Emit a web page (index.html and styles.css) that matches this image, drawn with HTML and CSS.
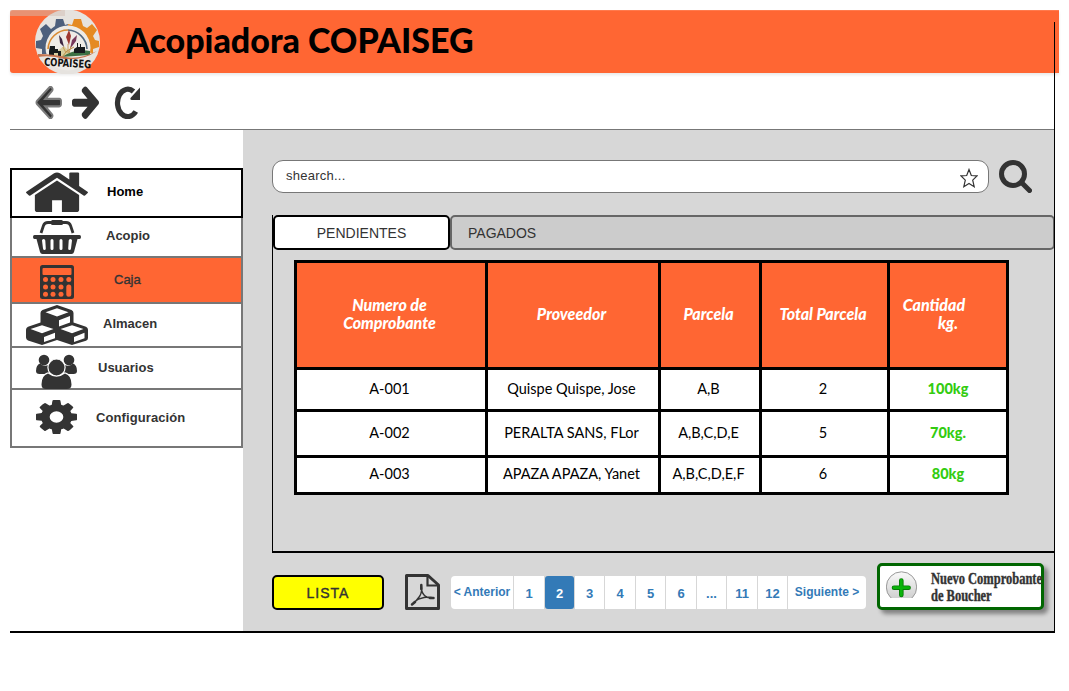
FILE: index.html
```html
<!DOCTYPE html>
<html lang="es">
<head>
<meta charset="utf-8">
<title>Acopiadora COPAISEG</title>
<link rel="stylesheet" href="styles.css">
</head>
<body>
<div class="page">
  <header class="banner">
    <svg class="logo" viewBox="0 0 65 64">
      <defs><clipPath id="arch"><path d="M11 48V37a22 22 0 0 1 44 0v8z"/></clipPath></defs>
      <ellipse cx="32.500" cy="32" rx="32.500" ry="32.500" fill="#e6e3df"/>
      <path fill="#4d5f7c" d="M33 14l-3 1-2-6-7 0-1 7-4 3-5-5-6 5 3 7-2 4-5 1 0 7 6 1v5l22 0z"/>
      <path fill="#e58a22" d="M33 14l4 1 2-6 7 0 2 7 4 2 5-4 5 6-4 6 2 4 4 1v6l-6 2v4l-25-2z"/>
      <circle cx="33" cy="38" r="22.500" fill="#eeebe6"/>
      <path d="M13 39a20 20 0 0 1 20-19" fill="none" stroke="#d98a32" stroke-width="1.600"/>
      <path d="M33 20a20 20 0 0 1 19 19" fill="none" stroke="#52677e" stroke-width="1.600"/>
      <g clip-path="url(#arch)">
        <path d="M17 45l12-9 7 7 4-2v6z" fill="#d8cf9e"/>
        <path d="M27 47q13-9 28-6v5l-20 4z" fill="#3d7144"/>
        <path d="M27 47q4-7 12-10" fill="none" stroke="#bd8c42"/>
      </g>
      <path d="M24 25l3 4 2 8-4-4z" fill="#3c2741"/><path d="M34 20l2 6-2 9-3-8z" fill="#9f3830"/><path d="M42 25l-1 6-6 8 2-9z" fill="#76375a"/>
      <path d="M28 37l3 6M33 34v9M36 36l-2 7" stroke="#bd8c42" stroke-width=".8"/>
      <path d="M15 36h5v3h3v2h3v5h-3v-3h-4v2h-5v-4zM39 43v-4l3-2v-4h1v4h2v-3h1v3h4v6z" fill="#171b1d"/>
      <path d="M3 44q15 0 28 3t31-6q-14 10-33 8-13-4-26-2z" fill="#c4744f"/>
      <text class="logo-name" x="9" y="57" textLength="47" lengthAdjust="spacingAndGlyphs" transform="rotate(3 32 55)">COPAISEG</text>
    </svg>
    <h1 class="title">Acopiadora COPAISEG</h1>
    <span class="corner"></span>
  </header>

  <nav class="toolbar">
    <svg class="nav-back" viewBox="120 160 1560 1580" preserveAspectRatio="none"><path fill="#333" stroke="#7b7b7b" stroke-width="110" d="M1624 896v128q0 43-26 75t-78 32h-804l393 394q25 26 25 60t-25 60l-35 36q-27 25-60 25-34 0-61-25l-721-662q-27-27-27-70 0-42 27-71l721-650q28-28 61-28 32 0 60 28l35 34q28 28 28 61t-28 61l-393 393h804q52 0 78 28t26 60z"/></svg>
    <svg class="nav-next" viewBox="64 160 1536 1580" preserveAspectRatio="none"><path fill="#333" d="M1600 960q0 54-37 91l-651 651q-39 37-91 37-51 0-90-37l-75-75q-38-38-38-91t38-91l293-293h-757q-52 0-90-37.500t-38-90.500v-128q0-53 38-90.500t90-37.500h757l-293-294q-38-36-38-90t38-90l75-75q38-38 90-38 53 0 91 38l651 651q37 35 37 90z"/></svg>
    <svg class="nav-reload" viewBox="0 0 26 33"><path d="M21.800 25.500A10.300 13.700 0 1 1 19.500 5.500" fill="none" stroke="#333" stroke-width="5.200"/><path d="M26 1.500V14H17.500q-2-.5-1-2z" fill="#333"/></svg>
  </nav>

  <div class="workspace">
    <aside class="sidebar">
      <ul class="menu">
        <li class="item home">
          <svg class="icon" viewBox="89 240 1614 1296" preserveAspectRatio="none"><path d="M1472 992v480q0 26-19 45t-45 19h-384v-384h-256v384h-384q-26 0-45-19t-19-45v-480q0-1 .5-3t.5-3l575-474 575 474q1 2 1 6zm223-69l-62 74q-8 9-21 11h-3q-13 0-21-7l-692-577-692 577q-12 8-24 7-13-2-21-11l-62-74q-8-10-7-23.500t11-21.500l719-599q32-26 76-26t76 26l244 204v-195q0-14 9-23t23-9h192q14 0 23 9t9 23v408l219 182q10 8 11 21.500t-7 23.500z"/></svg>
          <span class="label">Home</span>
        </li>
        <li class="item acopio">
          <svg class="icon" viewBox="0 0 48 34"><path d="M8 13L10.500 5.500Q11.500 2.500 15 2.500H33Q36.500 2.500 37.500 5.500L40 13" fill="none" stroke="#333" stroke-width="2.800"/><rect x="18" y="0" width="12" height="5" rx="1.500"/><path fill-rule="evenodd" d="M1.500 15H46.500Q48 15 48 17T46.500 19H44.500L41 32Q40.500 34 38.500 34H9.500Q7.500 34 7 32L3.500 19H1.500Q0 19 0 17T1.500 15zM9 20.500l1 8q.3 1.500 1.500 1.500t1.300-1.500l-.5-8q-.2-1.500-1.700-1.500t-1.600 1.500zM17.500 20.500v8q0 1.500 1.500 1.500t1.500-1.500v-8q0-1.500-1.500-1.500t-1.500 1.500zM26.500 20.500v8q0 1.500 1.500 1.500t1.500-1.500v-8q0-1.500-1.500-1.500t-1.500 1.500zM35.700 20.500l-.5 8q0 1.500 1.300 1.500t1.500-1.500l1-8q0-1.500-1.600-1.500t-1.700 1.500z"/></svg>
          <span class="label">Acopio</span>
        </li>
        <li class="item caja">
          <svg class="icon" viewBox="0 0 34 34"><rect width="34" height="34" rx="2.500"/><g fill="#f63"><rect x="2.500" y="3" width="29" height="7" rx="1"/><circle cx="5.500" cy="14.500" r="2.500"/><circle cx="13" cy="14.500" r="2.500"/><circle cx="21" cy="14.500" r="2.500"/><circle cx="28.800" cy="14.500" r="2.500"/><circle cx="5.500" cy="22" r="2.500"/><circle cx="13" cy="22" r="2.500"/><circle cx="21" cy="22" r="2.500"/><circle cx="5.500" cy="29.300" r="2.500"/><circle cx="13" cy="29.300" r="2.500"/><circle cx="21" cy="29.300" r="2.500"/><rect x="26.300" y="19.500" width="5" height="12.300" rx="2.500"/></g></svg>
          <span class="label">Caja</span>
        </li>
        <li class="item almacen">
          <svg class="icon" viewBox="0 0 62 40"><path d="M29.500.4q1.500-.7 3 0L45.500 5Q47.500 5.800 47.500 8v9.500l12.500 4.200q2 .8 2 3V33q0 2-2 2.800L47.500 39.600q-1.500.6-3 0L31 35 17.500 39.600q-1.500.6-3 0L2 35.500Q0 34.700 0 32.600V24.700q0-2.200 2-3l12.500-4.200V8q0-2.200 2-3z"/><g fill="#fff"><path d="M31 3.200L42.500 7.200 31 11.500 19.500 7.200zM33 15.200L44 11v6.500L33 21.500zM16 20.200l11.500 3.900L16 28.300 4.500 24.100zM18 32l11-4.300v5.600L18 37zM46 20.200l11.500 3.900L46 28.300 34.500 24.100zM48 32l10.500-4.300v5.600L48 37z"/></g></svg>
          <span class="label">Almacen</span>
        </li>
        <li class="item usuarios">
          <svg class="icon" viewBox="0 0 41 34"><circle cx="8" cy="5" r="5.300"/><circle cx="33" cy="5" r="5.300"/><path d="M4 8.500q4 3.500 8.500 1.500.5 5 3 7-5 .2-7 2H3.500Q0 19 0 16q0-6 4-7.500zM37 8.500q-4 3.500-8.500 1.500-.5 5-3 7 5 .2 7 2h5q3.500 0 3.500-3 0-6-4-7.500z"/><ellipse cx="20.500" cy="12.500" rx="8.600" ry="8.500" stroke="#fff" stroke-width="1.200"/><path d="M12 18.500q8.500 6.500 17 0 6.500 2 6.500 11 0 4.500-4.500 4.500H10q-4.500 0-4.500-4.500 0-9 6.500-11z"/></svg>
          <span class="label">Usuarios</span>
        </li>
        <li class="item config">
          <svg class="icon" viewBox="128 128 1536 1536" preserveAspectRatio="none"><path d="M1152 896q0-106-75-181t-181-75-181 75-75 181 75 181 181 75 181-75 75-181zm512-109v222q0 12-8 23t-20 13l-185 28q-19 54-39 91 35 50 107 138 10 12 10 25t-9 23q-27 37-99 108t-94 71q-12 0-26-9l-138-108q-44 23-91 38-16 136-29 186-7 28-36 28h-222q-14 0-24.500-8.500t-11.500-21.500l-28-184q-49-16-90-37l-141 107q-10 9-25 9-14 0-25-11-126-114-165-168-7-10-7-23 0-12 8-23 15-21 51-66.500t54-70.500q-27-50-41-99l-183-27q-13-2-21-12.500t-8-23.500v-222q0-12 8-23t19-13l186-28q14-46 39-92-40-57-107-138-10-12-10-24 0-10 9-23 26-36 98.500-107.500t94.500-71.500q13 0 26 10l138 107q44-23 91-38 16-136 29-186 7-28 36-28h222q14 0 24.500 8.500t11.500 21.500l28 184q49 16 90 37l142-107q9-9 24-9 13 0 25 10 129 119 165 170 7 8 7 22 0 12-8 23-15 21-51 66.500t-54 70.500q26 50 41 98l183 28q13 2 21 12.500t8 23.500z"/></svg>
          <span class="label">Configuración</span>
        </li>
      </ul>
    </aside>

    <main class="content">
      <div class="search-row">
        <div class="search-box">
          <span>shearch...</span>
          <svg class="star" viewBox="0 0 18 20"><path d="M9 1.500L11.300 7.500 17 7.800 12.700 12.200 14.200 18.700 9 15.500 3.800 18.700 5.300 12.200 1 7.800 6.700 7.500z" fill="#fff" stroke="#333" stroke-width="1.200"/></svg>
        </div>
        <svg class="magnifier" viewBox="0 0 33 33"><circle cx="14" cy="14" r="11.500" fill="none" stroke="#333" stroke-width="5"/><path d="M22.500 22.500L30.500 30.500" stroke="#333" stroke-width="5" stroke-linecap="round"/></svg>
      </div>

      <section class="panel">
        <div class="tabs">
          <div class="tab active">PENDIENTES</div>
          <div class="tab rest">PAGADOS</div>
        </div>
        <div class="grid">
          <div class="head">Numero de<br>Comprobante</div><div class="head">Proveedor</div><div class="head">Parcela</div><div class="head">Total Parcela</div><div class="head qty"><span class="qty-name">Cantidad</span><span>kg.</span></div>
          <div class="cell">A-001</div><div class="cell">Quispe Quispe, Jose</div><div class="cell">A,B</div><div class="cell">2</div><div class="cell kg">100kg</div>
          <div class="cell">A-002</div><div class="cell tight">PERALTA SANS, FLor</div><div class="cell">A,B,C,D,E</div><div class="cell">5</div><div class="cell kg">70kg.</div>
          <div class="cell">A-003</div><div class="cell tight">APAZA APAZA, Yanet</div><div class="cell">A,B,C,D,E,F</div><div class="cell">6</div><div class="cell kg">80kg</div>
        </div>
      </section>

      <footer class="actions">
        <button class="lista">LISTA</button>
        <svg class="pdf" viewBox="0 0 35 36"><path d="M1.500 1.500H23L33.500 11V34.500H1.500z" fill="none" stroke="#333" stroke-width="3" stroke-linejoin="round"/><path d="M22.500 2V11.500H33" fill="none" stroke="#333" stroke-width="2.200"/><path d="M16.300 11.500Q17.500 18 14.500 22.500T7 30.500M16.300 11.500Q16 18 19.500 21.500T28.500 24M9 28Q13 24.500 19 23.500T28.500 24" fill="none" stroke="#333" stroke-width="1.400"/><path d="M16.300 11v4M25 24h3.500M7 30.500l3-2.500" stroke="#333" stroke-width="2.500" stroke-linecap="round"/></svg>
        <div class="pager">
          <span class="word">&lt; Anterior</span><span>1</span><span class="current">2</span><span>3</span><span>4</span><span>5</span><span>6</span><span>...</span><span>11</span><span>12</span><span class="word">Siguiente &gt;</span>
        </div>
        <button class="create">
          <svg class="plus" viewBox="0 0 31 27"><defs><linearGradient id="disc" x2="0" y2="1"><stop offset="0" stop-color="#fafafa"/><stop offset="1" stop-color="#c9c9c9"/></linearGradient></defs><circle cx="15.500" cy="16" r="15.200" fill="url(#disc)" stroke="#999"/><path d="M15.300 9.500V24M8 16.700H22.600" stroke="#087c08" stroke-width="4.600" stroke-linecap="round"/><path d="M15.300 9.500V24M8 16.700H22.600" stroke="#0bb30b" stroke-width="2.800" stroke-linecap="round"/></svg>
          <span class="create-text"><span class="line one">Nuevo Comprobante</span><span class="line two">de Boucher</span></span>
        </button>
      </footer>
    </main>
  </div>
  <span class="edge"></span>
</div>
</body>
</html>
```

FILE: styles.css
```css
* { box-sizing: border-box; }
body { margin: 0; background: #fff; color: #333; font: 13px/16px "Liberation Sans", Arial, sans-serif; }
svg { display: block; flex: none; }
button { font: inherit; color: inherit; padding: 0; }

.page { position: relative; width: 1069px; height: 691px; padding: 10px; overflow: hidden; }

.banner { position: relative; display: flex; align-items: center; height: 63px; padding-left: 25px; background: #f63; border-radius: 3px 0 0 3px; border-top: 1px solid #ff7a4d; box-shadow: 0 2px 3px rgba(0,0,0,.09); }
.logo { width: 65px; height: 64px; }
.logo-name { font: bold 11px "DejaVu Sans", sans-serif; fill: #111; }
.title { margin: 0 0 4px 26px; font: 900 34px/40px Lato, sans-serif; color: #000; white-space: nowrap; transform-origin: 0 50%; }
.corner { position: absolute; left: 0; top: -1px; width: 55px; height: 6px; background: rgba(210,190,180,.5); }

.toolbar { display: flex; height: 57px; padding: 13px 0 0 25px; width: 1045px; border-bottom: 1px solid #777; }
.nav-back { width: 27px; height: 33px; }
.nav-next { width: 27px; height: 33px; margin-left: 10px; }
.nav-reload { width: 26px; height: 33px; margin-left: 15px; }

.workspace { display: flex; width: 1045px; height: 503px; border-bottom: 2px solid #000; }
.sidebar { width: 233px; padding-top: 38px; }
.menu { list-style: none; margin: 0; padding: 0; }
.item { display: flex; border: 2px solid #777; border-top: 0; font-weight: bold; }
.icon { fill: #333; }
.home { height: 50px; border: 2px solid #000; color: #000; padding: 2px 0 0 14px; }
.home .icon { width: 62px; height: 40px; }
.home .label { margin: 12px 0 0 19px; }
.acopio { height: 40px; padding: 2px 0 0 21px; }
.acopio .icon { width: 48px; height: 34px; }
.acopio .label { margin: 8px 0 0 25px; }
.caja { height: 46px; padding: 7px 0 0 28px; background: #f63; }
.caja .icon { width: 34px; height: 34px; }
.caja .label { margin: 7px 0 0 40px; font-weight: normal; -webkit-text-stroke: .35px #333; }
.almacen { height: 44px; padding: 1px 0 0 14px; }
.almacen .icon { width: 62px; height: 40px; }
.almacen .label { margin: 11px 0 0 15px; }
.usuarios { height: 42px; padding: 7px 0 0 24px; }
.usuarios .icon { width: 41px; height: 34px; overflow: visible; }
.usuarios .label { margin: 5px 0 0 21px; }
.config { height: 58px; padding: 10px 0 0 24px; }
.config .icon { width: 41px; height: 34px; }
.config .label { margin: 10px 0 0 19px; letter-spacing: .1px; }

.content { flex: 1; padding: 30px 0 0 29px; background: #d7d7d7; }
.search-row { display: flex; }
.search-box { display: flex; justify-content: space-between; width: 717px; height: 33px; padding: 7px 10px 0 13px; border: 1px solid #777; border-radius: 11px; background: #fff; }
.search-box span { letter-spacing: .25px; }
.star { width: 18px; height: 20px; }
.magnifier { width: 33px; height: 33px; margin-left: 10px; }

.panel { width: 782px; height: 338px; margin-top: 22px; border-left: 1px solid #000; border-bottom: 2px solid #000; }
.tabs { display: flex; height: 35px; width: 782px; font-size: 14px; }
.tab { border: 2px solid #666; border-radius: 5px; padding-top: 8px; }
.active { width: 177px; background: #fff; border-color: #000; text-align: center; }
.rest { flex: 1; padding-left: 16px; background: #ccc; }

.grid { display: grid; grid-template-columns: 188px 170px 98px 125px 116px; grid-template-rows: 104px 39px 43px 34px; gap: 3px; width: 715px; margin: 10px 0 0 21px; padding: 3px; background: #000; font: 14.5px/18px Lato, sans-serif; color: #000; }
.head, .cell { display: flex; align-items: center; justify-content: center; padding: 0 3px 2px 0; text-align: center; white-space: nowrap; background: #fff; }
.head { background: #f63; color: #fff; font-size: 16px; font-weight: 900; font-style: italic; }
.qty { flex-direction: column; padding-right: 0; }
.qty-name { margin-right: 28px; }
.kg { padding-right: 0; font-weight: 900; color: #3c1; }

.actions { display: flex; align-items: flex-start; padding-top: 10px; }
.lista { width: 112px; height: 35px; margin-top: 12px; border: 2px solid #000; border-radius: 5px; background: #ff0; font-size: 14px; letter-spacing: 1px; -webkit-text-stroke: .4px #333; }
.pdf { width: 35px; height: 36px; margin: 11px 0 0 21px; }
.pager { display: grid; grid-template-columns: 62px 30px 29px 29px 30px 29px 30px 29px 30px 29px 78px; gap: 1px; height: 33px; margin: 13px 0 0 11px; border-radius: 4px; overflow: hidden; font-size: 13px; font-weight: bold; color: #337ab7; text-align: center; }
.pager span { background: #fff; padding-top: 10px; white-space: nowrap; }
.pager .word { padding-top: 8px; font-size: 12px; }
.pager .current { background: #337ab7; color: #fff; border-radius: 3px; }
.create { display: flex; width: 167px; height: 47px; margin-left: 11px; padding: 5px 0 0 6px; border: 3px solid #060; border-radius: 5px; background: #fff; box-shadow: 4px 4px 4px rgba(0,0,0,.4); text-align: left; }
.plus { width: 31px; height: 27px; }
.create-text { display: flex; flex-direction: column; margin: -1px 0 0 14px; font: bold 16px/17px "Liberation Serif", serif; }
.line { white-space: nowrap; transform-origin: 0 50%; transform: scaleX(.78); -webkit-text-stroke: .4px #333; }

/* Right window edge, drawn across the banner */
.edge { position: absolute; left: 1054px; top: 22px; width: 1px; height: 611px; background: #000; }
```
